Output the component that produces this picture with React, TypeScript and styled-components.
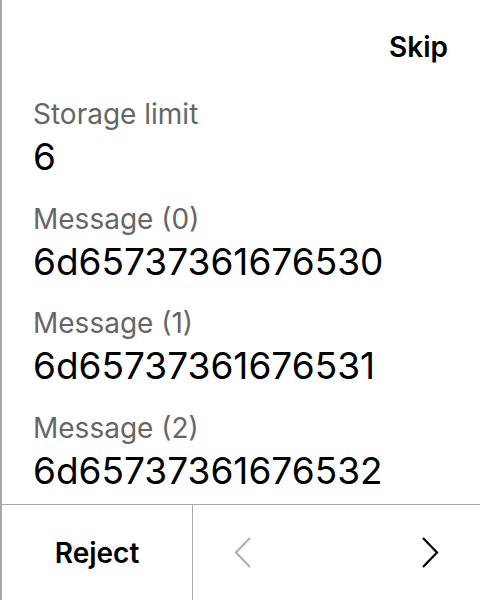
import React from "react";
import styled, { createGlobalStyle } from "styled-components";

const Global = createGlobalStyle`
  html, body { margin: 0; padding: 0; background: #fff; }
  body { font-family: Inter, "Noto Sans", sans-serif; }
`;

const Screen = styled.div`
  width: 480px;
  height: 600px;
  box-sizing: border-box;
  border-left: 2px solid #a8a8a8;
  display: flex;
  flex-direction: column;
  background: #fff;
`;

const Header = styled.div`
  height: 94px;
  flex-shrink: 0;
  display: flex;
  justify-content: flex-end;
  align-items: center;
  padding-right: 32px;
`;

const TextButton = styled.button`
  border: none;
  background: none;
  padding: 0;
  font-family: inherit;
  font-size: 28px;
  line-height: 34px;
  font-weight: 600;
  color: #000;
  cursor: pointer;
`;

const Content = styled.div`
  flex: 1;
  padding: 0 0 0 31px;
  display: flex;
  flex-direction: column;
  gap: 19.5px;
`;

const Field = styled.div`
  display: flex;
  flex-direction: column;
`;

const Label = styled.div`
  font-size: 28px;
  line-height: 40px;
  color: #666;
`;

const Value = styled.div`
  font-size: 37px;
  line-height: 45px;
  color: #000;
`;

const Footer = styled.div`
  height: 96px;
  box-sizing: border-box;
  flex-shrink: 0;
  border-top: 1px solid #a8a8a8;
  display: flex;
`;

const RejectCell = styled.div`
  width: 190px;
  display: flex;
  align-items: center;
  justify-content: center;
`;

const Nav = styled.div`
  flex: 1;
  display: flex;
  align-items: center;
  justify-content: space-between;
  padding: 0 41px 0 41px;
  border-left: 1px solid #a8a8a8;
`;

const Chevron = ({ dir, color }: { dir: "l" | "r"; color: string }) => (
  <svg width="18" height="31" viewBox="0 0 18 31" fill="none">
    <path
      d={dir === "l" ? "M16 1 L2 15.5 L16 30" : "M2 1 L16 15.5 L2 30"}
      stroke={color}
      strokeWidth="2.2"
    />
  </svg>
);

const fields = [
  { label: "Storage limit", value: "6" },
  { label: "Message (0)", value: "6d65737361676530" },
  { label: "Message (1)", value: "6d65737361676531" },
  { label: "Message (2)", value: "6d65737361676532" },
];

export default function App() {
  return (
    <>
      <Global />
      <Screen>
        <Header>
          <TextButton>Skip</TextButton>
        </Header>
        <Content>
          {fields.map((f) => (
            <Field key={f.label}>
              <Label>{f.label}</Label>
              <Value>{f.value}</Value>
            </Field>
          ))}
        </Content>
        <Footer>
          <RejectCell>
            <TextButton>Reject</TextButton>
          </RejectCell>
          <Nav>
            <Chevron dir="l" color="#b0b0b0" />
            <Chevron dir="r" color="#000" />
          </Nav>
        </Footer>
      </Screen>
    </>
  );
}
